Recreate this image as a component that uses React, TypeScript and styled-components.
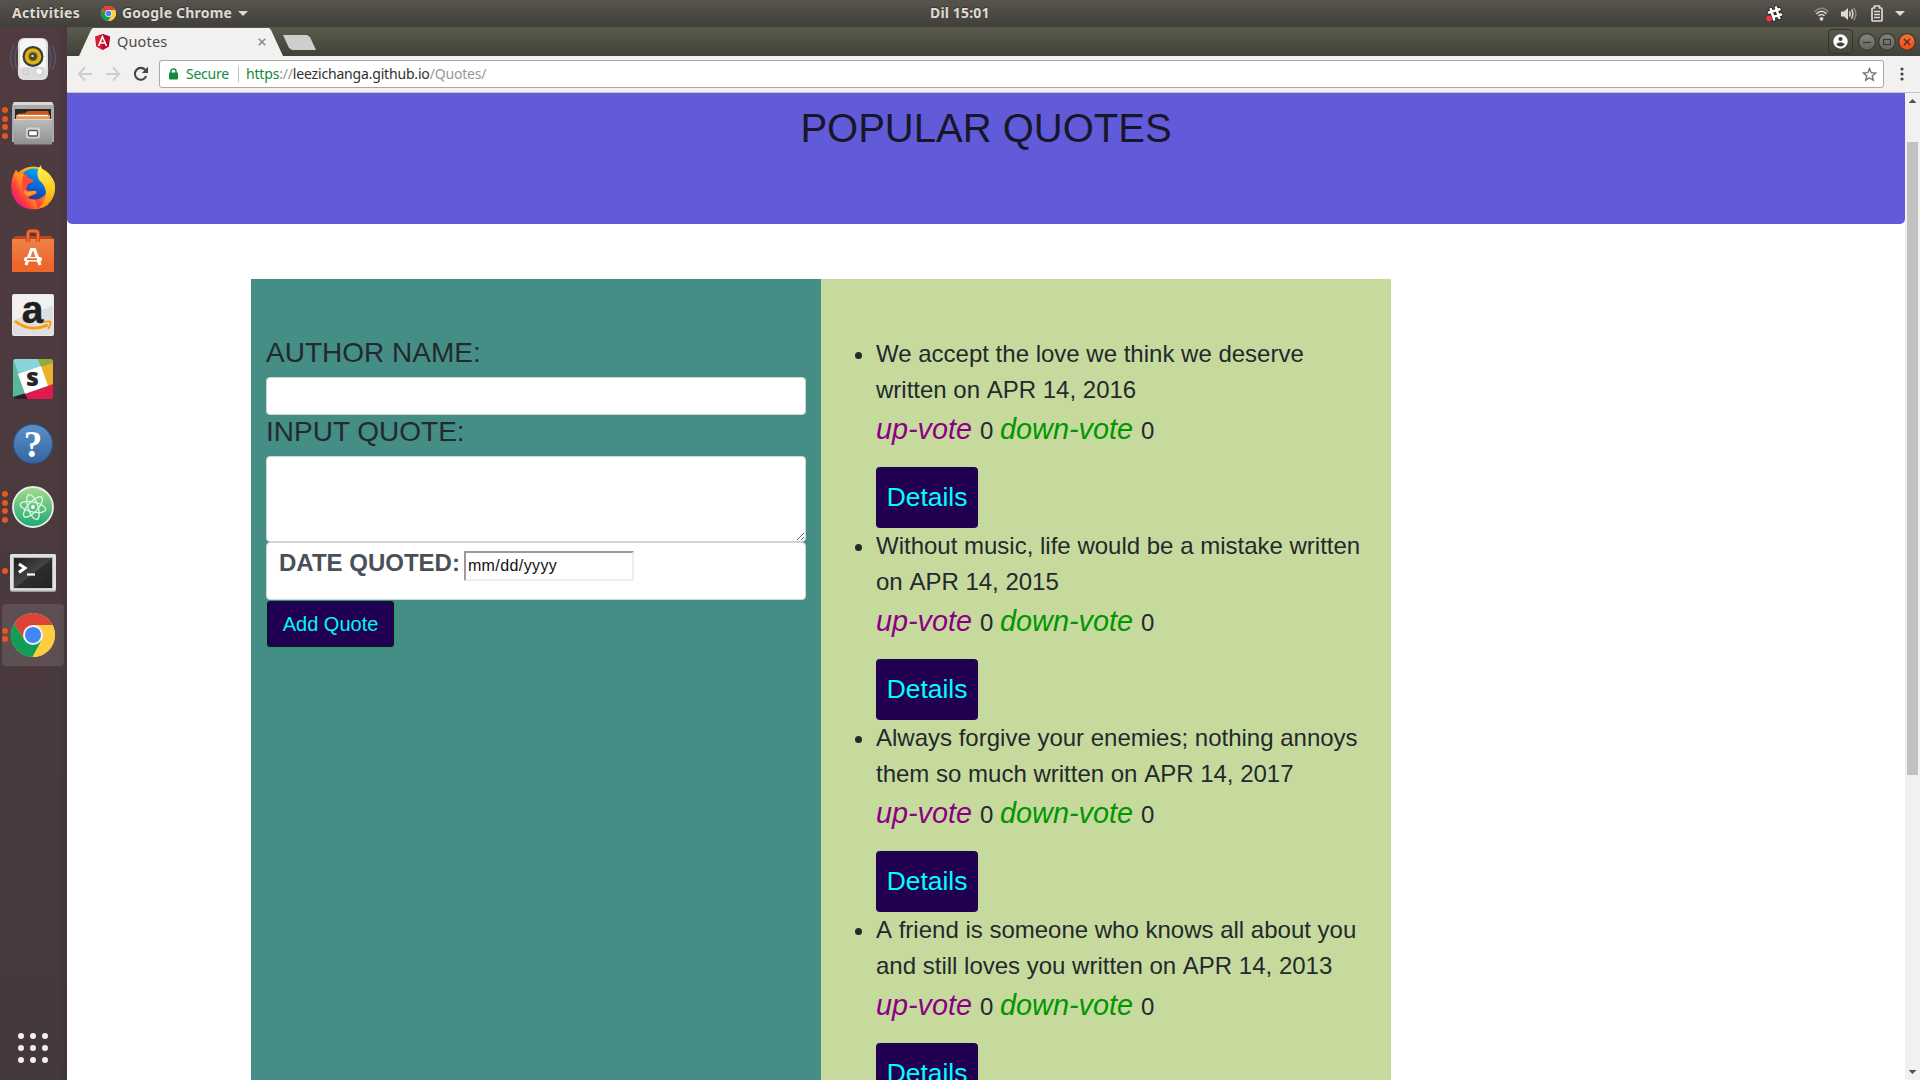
import React from 'react';
import styled, { createGlobalStyle } from 'styled-components';

const Global = createGlobalStyle`
  *, *::before, *::after { box-sizing: border-box; }
  body { margin: 0; overflow: hidden; background: #fff; font-family: "Liberation Sans", Arial, sans-serif; }
  svg { display: block; overflow: visible; flex: none; }
`;

const Desktop = styled.div`
  width: 1920px;
  height: 1080px;
  display: flex;
  flex-direction: column;
  overflow: hidden;
`;

/* ---------- system bar ---------- */
const SystemBar = styled.header`
  flex: none;
  height: 27px;
  display: grid;
  grid-template-columns: 1fr auto 1fr;
  align-items: center;
  padding: 0 15px 0 12px;
  background: linear-gradient(#58544d, #403f3a);
  color: #dfdbd2;
  font: bold 14px/26px "Noto Sans", "Open Sans", sans-serif;
  text-shadow: 0 -1px 1px rgba(0, 0, 0, 0.35);
`;
const SystemLeft = styled.div`
  display: flex;
  align-items: center;
`;
const SystemLabel = styled.span<{ $width: number; $track: number }>`
  width: ${p => p.$width}px;
  letter-spacing: ${p => p.$track}px;
  padding-bottom: 2px;
  line-height: 24px;
  white-space: nowrap;
`;
const AppMenu = styled.div`
  display: flex;
  align-items: center;
  gap: 6px;
  margin-left: 20px;
`;
const Tray = styled.div`
  display: flex;
  align-items: center;
  justify-content: flex-end;
`;
const TrayItem = styled.span<{ $gap: number }>`
  display: flex;
  margin-left: ${p => p.$gap}px;
`;

/* ---------- dock ---------- */
const Workspace = styled.div`
  flex: 1;
  min-height: 0;
  display: flex;
`;
const Dock = styled.nav`
  flex: none;
  width: 67px;
  display: flex;
  flex-direction: column;
  background: linear-gradient(90deg, rgba(0, 0, 0, 0) 85%, rgba(0, 0, 0, 0.06)), linear-gradient(#4f3b40, #4b3a3e 40%, #45383c);
`;
const DockItem = styled.div<{ $active?: boolean; $drop?: number }>`
  position: relative;
  height: 62px;
  width: 62px;
  margin: 1px 0 1px 2px;
  padding-top: ${p => p.$drop ?? 0}px;
  border-radius: 4px;
  background: ${p => (p.$active ? 'rgba(255,255,255,0.11)' : 'transparent')};
  display: flex;
  align-items: center;
  justify-content: center;
`;
const Running = styled.div`
  position: absolute;
  left: 0;
  top: 0;
  height: 100%;
  width: 6px;
  display: flex;
  flex-direction: column;
  justify-content: center;
  gap: 2.6px;
`;
const RunningDot = styled.i`
  width: 6px;
  height: 6px;
  border-radius: 50%;
  background: #e95420;
`;
const AppsGrid = styled.div`
  margin: auto 0 17px 18px;
  display: grid;
  grid-template-columns: repeat(3, 6px);
  gap: 6px;
`;
const AppsDot = styled.i`
  height: 6px;
  border-radius: 50%;
  background: #f2f0ef;
`;

/* ---------- browser ---------- */
const Browser = styled.main`
  flex: 1;
  min-width: 0;
  display: flex;
  flex-direction: column;
`;
const TabStrip = styled.div`
  flex: none;
  height: 29px;
  display: flex;
  align-items: flex-end;
  justify-content: space-between;
  background: linear-gradient(#5b5b4c, #40413a);
`;
const Tabs = styled.div`
  display: flex;
  height: 28px;
  padding-left: 12px;
`;
const Tab = styled.div`
  width: 204px;
  display: flex;
  align-items: center;
  padding: 0 17px 0 16px;
  background: #f2f1f0;
  clip-path: polygon(0 100%, 12px 2px, 14px 0, 190px 0, 192px 2px, 204px 100%);
  color: #4c4a48;
  font: 14.5px/24px "Noto Sans", "Open Sans", sans-serif;
`;
const TabTitle = styled.span`
  flex: 1;
  margin-left: 7px;
  padding-bottom: 2px;
  letter-spacing: 0.15px;
`;
const NewTab = styled.div`
  width: 33px;
  height: 15px;
  margin-top: 7px;
  background: #cfcecc;
  clip-path: polygon(0 0, 24px 0, 27px 2px, 33px 100%, 9px 100%, 6px 13px);
`;
const WindowButtons = styled.div`
  display: flex;
  align-items: center;
  height: 29px;
  padding: 0 3px 0 0;
`;
const ProfileButton = styled.div`
  width: 25px;
  height: 25px;
  margin: 0 4px 0 0;
  border: 1px solid #33342d;
  border-radius: 4px;
  display: flex;
  align-items: center;
  justify-content: center;
`;
const Toolbar = styled.div`
  flex: none;
  height: 37px;
  display: flex;
  align-items: center;
  padding: 0 14px 0 10px;
  background: #f2f1f0;
  border-bottom: 1px solid #c6c4c1;
`;
const NavIcons = styled.div`
  display: flex;
  align-items: center;
  gap: 12px;
  width: 82px;
`;
const Omnibox = styled.div`
  width: 1725px;
  height: 28px;
  display: flex;
  align-items: center;
  padding: 0 6px 0 9px;
  margin-right: 16px;
  border: 1px solid #a9a8a6;
  border-radius: 3px;
  background: #fff;
  font: 14px/24px "Noto Sans", "Open Sans", sans-serif;
`;
const Secure = styled.span`
  width: 52px;
  margin-left: 8px;
  color: #128a3a;
  letter-spacing: -0.25px;
`;
const Separator = styled.i`
  width: 1px;
  height: 16px;
  background: #c3c3c3;
`;
const Url = styled.span`
  flex: 1;
  margin-left: 7px;
  color: #989898;
  letter-spacing: -0.18px;
`;
const Scheme = styled.span`
  color: #128a3a;
`;
const Host = styled.span`
  color: #303030;
`;

/* ---------- web page ---------- */
const Viewport = styled.div`
  flex: 1;
  min-height: 0;
  display: flex;
  background: #fff;
`;
const Page = styled.div`
  flex: 1;
  min-width: 0;
  overflow: hidden;
`;
const Banner = styled.div`
  height: 131px;
  padding-top: 11px;
  border-radius: 0 0 5px 5px;
  background: #625bd9;
  text-align: center;
`;
const Title = styled.h1`
  margin: 0;
  font-size: 40px;
  font-weight: 400;
  line-height: 48px;
  color: #17162b;
`;
const Columns = styled.div`
  display: flex;
  width: 1140px;
  height: 900px;
  margin: 55px 0 0 184px;
`;
const Panel = styled.section<{ $color: string }>`
  width: 570px;
  padding: 57px 15px 0;
  background: ${p => p.$color};
  color: #24292d;
`;
const FieldTitle = styled.h3`
  height: 33px;
  margin: 0 0 8px;
  font-size: 28px;
  font-weight: 400;
  line-height: 33.6px;
`;
const TextInput = styled.input`
  display: block;
  width: 540px;
  height: 38px;
  margin: 0;
  border: 1px solid #ced4da;
  border-radius: 4px;
  background: #fff;
`;
const TextArea = styled.textarea`
  display: block;
  width: 540px;
  height: 86px;
  margin: 0;
  border: 1px solid #ced4da;
  border-radius: 4px;
  background: #fff;
`;
const DateBox = styled.div`
  width: 540px;
  height: 58px;
  padding: 6px 12px;
  display: flex;
  gap: 4px;
  border: 1px solid #ced4da;
  border-radius: 4px;
  background: #fff;
  color: #495057;
  font-size: 24px;
  line-height: 27px;
  font-weight: bold;
`;
const DateInput = styled.div`
  width: 170px;
  height: 30px;
  margin-top: 2px;
  padding: 0 0 0 2px;
  border: 2px solid;
  border-color: #9a9a9a #eee #eee #9a9a9a;
  color: #111;
  font: 16px/26px "Liberation Sans", Arial, sans-serif;
  letter-spacing: 0.4px;
`;
const AddButton = styled.button`
  display: block;
  width: 129px;
  height: 48px;
  padding: 0;
  border: 1px solid #10b04c;
  border-radius: 4px;
  background: #210052;
  color: #00f6f6;
  font: 20px/30px "Liberation Sans", Arial, sans-serif;
`;
const QuoteList = styled.ul`
  margin: 0;
  padding: 0 0 0 40px;
  font-size: 24px;
  line-height: 36px;
`;
const QuoteItem = styled.li`
  height: 192px;
`;
const LooseSpace = styled.span`
  font-kerning: none;
`;
const Votes = styled.div`
  height: 43px;
  margin-bottom: 16px;
  line-height: 43px;
  white-space: pre;
`;
const Vote = styled.em<{ $color: string }>`
  font-size: 28.8px;
  color: ${p => p.$color};
`;
const DetailsButton = styled.button`
  display: block;
  width: 102px;
  height: 61px;
  padding: 0;
  border: 0;
  border-radius: 4px;
  background: #210052;
  color: #00ffff;
  font: 26.4px/39px "Liberation Sans", Arial, sans-serif;
`;
const ScrollTrack = styled.div`
  flex: none;
  width: 15px;
  display: flex;
  flex-direction: column;
  align-items: center;
  background: #f1f1f1;
`;
const ScrollArrow = styled.i<{ $down?: boolean }>`
  width: 8px;
  height: 4px;
  margin: ${p => (p.$down ? 'auto 0 6px' : '6px 0 39px')};
  background: #505050;
  clip-path: ${p => (p.$down ? 'polygon(0 0, 100% 0, 50% 100%)' : 'polygon(50% 0, 100% 100%, 0 100%)')};
`;
const ScrollThumb = styled.div`
  width: 11px;
  height: 633px;
  background: #c1c1c1;
`;

/* ---------- drawings ---------- */
const ChromeLogo = ({ size }: { size: number }) => (
  <svg width={size} height={size} viewBox="0 0 44 44">
    <circle cx="22" cy="22" r="22" fill="#ffcd40" />
    <path d="M22 12H41.6A22 22 0 0 0 2.95 11L13.3 27z" fill="#db4437" />
    <path d="M2.95 11A22 22 0 0 0 21.5 44L31 27 13.3 27z" fill="#0f9d58" />
    <path d="M22 12H41.6A22 22 0 0 1 21.5 44L30.7 27z" fill="#ffcd40" />
    <circle cx="22" cy="22" r="10" fill="#f4f4f4" />
    <circle cx="22" cy="22" r="8" fill="#4285f4" />
  </svg>
);

const Speaker = () => (
  <svg width="50" height="46" viewBox="0 0 50 46">
    <g fill="none" stroke="#5b6f94" strokeWidth="1.4" opacity=".55">
      <path d="M10 9Q4 22 10 36M6 9Q-1 22 6 34M40 9Q46 22 40 36M44 9Q51 22 44 34" />
    </g>
    <rect x="10" y="2" width="30" height="42" rx="6" fill="#dedede" />
    <rect x="12" y="3" width="26" height="39" rx="5" fill="#f5f5f5" />
    <rect x="12" y="31" width="26" height="11" rx="4" fill="#dcdcdc" />
    <circle cx="25" cy="20.500" r="10.500" fill="#3b3b3b" />
    <circle cx="25" cy="20.500" r="8.300" fill="#dcb40d" />
    <circle cx="25" cy="20.500" r="4.500" fill="#6b5a16" />
    <circle cx="25" cy="20.500" r="3" fill="#3b4147" />
    <circle cx="24.500" cy="20" r="1.300" fill="#cfd3d6" />
    <circle cx="31" cy="35.500" r="3.600" fill="#fafafa" stroke="#c4c4c4" />
    <rect x="15.500" y="34" width="4.500" height="4.500" fill="none" stroke="#ccc" />
  </svg>
);

const Cabinet = () => (
  <svg width="42" height="44" viewBox="0 0 42 44">
    <defs>
      <linearGradient id="cab" x1="0" y1="0" x2="0" y2="1">
        <stop offset="0" stopColor="#bcbcbc" />
        <stop offset="1" stopColor="#8f8f8f" />
      </linearGradient>
    </defs>
    <path d="M2 1H40L42 5V41H0V5z" fill="#aaa" />
    <path d="M2 1H40L41.500 4H.5z" fill="#d9d9d9" />
    <rect x="3" y="8" width="36" height="12" fill="#2b2726" />
    <path d="M5 13L13 12 16 10H36L37 13V20H5z" fill="#c9581f" />
    <path d="M4 14H38V20H4z" fill="#eb9a55" />
    <path d="M6 14.500H36" stroke="#fff" strokeWidth="1.300" />
    <path d="M2 18H40V43.500H2z" fill="url(#cab)" />
    <path d="M2 18.500H40" stroke="#d5d5d5" />
    <rect x="14" y="26.500" width="14" height="11" rx="2" fill="#d2d2d2" />
    <rect x="16.500" y="29.500" width="9" height="5.500" rx="1" fill="#fff" stroke="#555" strokeWidth="1.300" />
  </svg>
);

const Firefox = () => (
  <svg width="44" height="46" viewBox="0 0 44 46">
    <defs>
      <linearGradient id="ffa" x1=".9" y1=".1" x2=".15" y2=".9">
        <stop offset="0" stopColor="#ffe226" />
        <stop offset=".4" stopColor="#ff9a1f" />
        <stop offset=".7" stopColor="#ff4038" />
        <stop offset="1" stopColor="#e3108b" />
      </linearGradient>
      <linearGradient id="ffb" x1=".6" y1="0" x2=".2" y2="1">
        <stop offset="0" stopColor="#00a8f5" />
        <stop offset=".6" stopColor="#0a5cd0" />
        <stop offset="1" stopColor="#302a86" />
      </linearGradient>
      <linearGradient id="ffc" x1=".5" y1="0" x2=".6" y2="1">
        <stop offset="0" stopColor="#fff352" />
        <stop offset=".6" stopColor="#ffc81e" />
        <stop offset="1" stopColor="#ff8b17" />
      </linearGradient>
    </defs>
    <circle cx="22" cy="24" r="21.500" fill="url(#ffa)" />
    <circle cx="23" cy="20" r="15.500" fill="url(#ffb)" />
    <path d="M5 6Q6 8 9 10 13 9 16 11L17 14 22 15 22 18 17 20 15 25Q18 28 24 27L25 30Q18 33 16 34 22 39 30 35L24 44Q4 44 1 27-1 15 5 6z" fill="#ff4a35" />
    <path d="M5 6Q6 8 9 10 11 9.500 13 9.800 9 17 12 26 14 35 24 36L27 45Q4 46 1 27-1 15 5 6z" fill="url(#ffa)" />
    <path d="M30 1Q30 7 37 10 47 17 43 31 39 43 27 45 35 38 35 28 34 21 28 16 24 7 30 1z" fill="url(#ffc)" />
    <path d="M13 26Q15 29 21 27 26 26 25.500 29 22 30 18 32 13 32 13 26z" fill="#ff9b27" />
  </svg>
);

const SoftwareBag = () => (
  <svg width="42" height="44" viewBox="0 0 42 44">
    <defs>
      <linearGradient id="bag" x1="0" y1="0" x2="0" y2="1">
        <stop offset="0" stopColor="#ef8146" />
        <stop offset="1" stopColor="#e9622c" />
      </linearGradient>
    </defs>
    <path d="M0 10L4 7H38L42 10z" fill="#b94a1a" />
    <path d="M0 10H42V43H0z" fill="url(#bag)" />
    <path d="M0 33H42V43H0z" fill="#ee6629" />
    <path d="M16 13V5Q16 2 19 2H23Q26 2 26 5V13" fill="none" stroke="#b9441a" strokeWidth="4.200" />
    <path d="M16 13V5Q16 2 19 2H23Q26 2 26 5V13" fill="none" stroke="#ea6a38" strokeWidth="2.400" />
    <path d="M14 36L19.500 20.500H22.500L28 36" fill="none" stroke="#fff" strokeWidth="3.200" />
    <rect x="12" y="28" width="18" height="4.500" rx="2.200" fill="#fff" />
    <path d="M15 30.200H25" stroke="#e9622c" strokeWidth="1.700" />
  </svg>
);

const Amazon = () => (
  <svg width="42" height="42" viewBox="0 0 42 42">
    <rect width="42" height="42" rx="2" fill="#e9e9e9" />
    <rect x="1" y="1" width="40" height="40" rx="2" fill="#f1f1f1" />
    <path d="M1 41V26L41 12V41z" fill="#dfdfdf" />
    <text x="20.500" y="28.500" fontFamily="Liberation Sans, sans-serif" fontWeight="bold" fontSize="39" fill="#1f1f1f" stroke="#1f1f1f" strokeWidth=".5" textAnchor="middle">a</text>
    <path d="M3 27Q18 39 36 31" fill="none" stroke="#ff9900" strokeWidth="2.800" />
    <path d="M31 28.500Q37 26.500 38.500 28 39 31 36 35" fill="none" stroke="#ff9900" strokeWidth="1.800" />
  </svg>
);

const Slack = () => (
  <svg width="40" height="40" viewBox="0 0 40 40">
    <defs>
      <clipPath id="sl"><rect width="40" height="40" rx="3" /></clipPath>
    </defs>
    <g clipPath="url(#sl)">
      <rect width="40" height="40" fill="#3eb890" />
      <path d="M0 0H26L30 9 5 17z" fill="#8ad3d8" />
      <path d="M0 0L6 16 0 18z" fill="#62b5a0" />
      <path d="M25 0H40V5L28 9z" fill="#92ab3c" />
      <path d="M28 8L40 4V27L35 29z" fill="#ecb22e" />
      <path d="M35 29L40 27V40H15L12 36z" fill="#e01a4f" />
      <path d="M0 37L12 33 15 40H0z" fill="#331832" />
      <path d="M0 18L6 16 13 34 0 38z" fill="#55b99b" />
      <path d="M5 15L28 7 35 27 12 35z" fill="#fff" />
      <path d="M12 35L35 27 40 25V40H15z" fill="#e01a4f" />
    </g>
    <text x="19.500" y="27" fontFamily="Open Sans, sans-serif" fontWeight="800" fontSize="25" fill="#262626" textAnchor="middle">s</text>
  </svg>
);

const Help = () => (
  <svg width="40" height="40" viewBox="0 0 40 40">
    <defs>
      <linearGradient id="hp" x1="0" y1="0" x2="0" y2="1">
        <stop offset="0" stopColor="#5b91cb" />
        <stop offset="1" stopColor="#34659f" />
      </linearGradient>
    </defs>
    <circle cx="20" cy="20" r="19.500" fill="url(#hp)" stroke="#2c5588" />
    <text x="20" y="33" fontFamily="Liberation Serif, serif" fontWeight="bold" fontSize="37" fill="#fff" textAnchor="middle">?</text>
  </svg>
);

const Atom = () => (
  <svg width="42" height="42" viewBox="0 0 42 42">
    <defs>
      <linearGradient id="at" x1="0" y1="0" x2="0" y2="1">
        <stop offset="0" stopColor="#a6dc8a" />
        <stop offset="1" stopColor="#1aa975" />
      </linearGradient>
    </defs>
    <circle cx="21" cy="21" r="20" fill="url(#at)" stroke="#ececec" strokeWidth="1.800" />
    <g fill="none" stroke="#e4f6e6" strokeWidth="1.300">
      <ellipse cx="21" cy="21" rx="13" ry="5" transform="rotate(12 21 21)" />
      <ellipse cx="21" cy="21" rx="13" ry="5" transform="rotate(72 21 21)" />
      <ellipse cx="21" cy="21" rx="13" ry="5" transform="rotate(132 21 21)" />
    </g>
    <circle cx="21" cy="21" r="1.900" fill="#fff" />
  </svg>
);

const Terminal = () => (
  <svg width="46" height="38" viewBox="0 0 46 38">
    <defs>
      <linearGradient id="tm" x1="0" y1="0" x2="1" y2="1">
        <stop offset="0" stopColor="#1f1f1f" />
        <stop offset=".5" stopColor="#444" />
        <stop offset=".52" stopColor="#2d2d2d" />
        <stop offset="1" stopColor="#222" />
      </linearGradient>
    </defs>
    <rect width="46" height="38" rx="2" fill="#9d9d9d" />
    <rect width="46" height="36.500" rx="2" fill="#e0e0e0" />
    <rect x="3" y="3" width="40" height="31.500" fill="#b5b5b5" />
    <rect x="4" y="4" width="38" height="30" fill="url(#tm)" />
    <path d="M9 10L15 14 9 18.500" fill="none" stroke="#fff" strokeWidth="3" />
    <path d="M17 20.500H25" stroke="#fff" strokeWidth="2.200" />
  </svg>
);

const Angular = () => (
  <svg width="15" height="16" viewBox="0 0 15 16">
    <path d="M7.500 0L15 2.600 13.800 12.500 7.500 16 1.200 12.500 0 2.600z" fill="#dd1b2e" />
    <path d="M7.500 0L15 2.600 13.800 12.500 7.500 16z" fill="#b8062a" />
    <path d="M3.500 12L7.500 2.800 11.500 12M5 9H10" fill="none" stroke="#fff" strokeWidth="1.600" />
  </svg>
);

const SlackTray = () => (
  <svg width="18" height="18" viewBox="0 0 18 18">
    <g transform="rotate(-17 10 8.500)" strokeLinecap="round" fill="none">
      <path d="M7.300 3V14M12.700 3V14M4.500 5.800H15.500M4.500 11.200H15.500" stroke="#1c1c1a" strokeWidth="4.200" />
      <path d="M7.300 3V14M12.700 3V14M4.500 5.800H15.500M4.500 11.200H15.500" stroke="#fff" strokeWidth="2.600" />
    </g>
    <circle cx="4" cy="13.500" r="3.200" fill="#ee3a48" stroke="#7d2326" strokeWidth=".7" />
  </svg>
);

const Wifi = () => (
  <svg width="15" height="14" viewBox="0 0 15 14" fill="none">
    <path d="M.7 5Q7.500-2.500 14.300 5" stroke="#8b8881" strokeWidth="1.700" />
    <path d="M2.500 7Q7.500 1.500 12.500 7" stroke="#dfdbd2" strokeWidth="1.600" />
    <path d="M4.500 9Q7.500 6 10.500 9" stroke="#dfdbd2" strokeWidth="1.500" />
    <circle cx="7.500" cy="11.800" r="1.900" fill="#dfdbd2" />
  </svg>
);

const Volume = () => (
  <svg width="16" height="14" viewBox="0 0 16 14" fill="none">
    <path d="M0 4.500H3L7 1V13L3 9.500H0z" fill="#dfdbd2" />
    <path d="M8.500 4.500Q10 7 8.500 9.500M10.500 2.500Q13.200 7 10.500 11.500" stroke="#dfdbd2" strokeWidth="1.500" />
    <path d="M12.500.8Q17.300 7 12.500 13.200" stroke="#8b8881" strokeWidth="1.500" />
  </svg>
);

const Battery = () => (
  <svg width="12" height="17" viewBox="0 0 12 17" fill="none" stroke="#dfdbd2">
    <path d="M1 4Q1 3 2 3H3.500V1H8.500V3H10Q11 3 11 4V15Q11 16 10 16H2Q1 16 1 15z" strokeWidth="1.700" />
    <path d="M3 6.500H9M3 9.500H9M3 12.500H9" strokeWidth="1.500" />
  </svg>
);

const Caret = () => (
  <svg width="10" height="5" viewBox="0 0 10 5">
    <path d="M0 0H10L5 5z" fill="#dfdbd2" />
  </svg>
);

const WindowControl = ({ kind }: { kind: 'min' | 'max' | 'close' }) => (
  <svg width="20" height="20" viewBox="0 0 20 20" fill="none">
    <defs>
      <linearGradient id={'wc' + kind} x1="0" y1="0" x2="0" y2="1">
        <stop offset="0" stopColor={kind === 'close' ? '#f4743f' : '#86857c'} />
        <stop offset="1" stopColor={kind === 'close' ? '#e84b18' : '#66665e'} />
      </linearGradient>
    </defs>
    <circle cx="10" cy="10" r="8.300" fill={`url(#wc${kind})`} stroke="#35362f" strokeWidth="1.200" />
    {kind === 'min' && <path d="M6 10.500H14" stroke="#383933" strokeWidth="1.200" />}
    {kind === 'max' && <rect x="6.500" y="7.500" width="7" height="5" stroke="#383933" strokeWidth="1.200" />}
    {kind === 'close' && <path d="M7 7L13 13M13 7L7 13" stroke="#4b2a17" strokeWidth="1.300" />}
  </svg>
);

const ProfileIcon = () => (
  <svg width="15" height="15" viewBox="0 0 15 15">
    <circle cx="7.500" cy="7.500" r="7.200" fill="#fff" />
    <circle cx="7.500" cy="5" r="2.100" fill="#3f4038" />
    <path d="M3.200 10.300Q5 8.300 7.500 8.300T11.800 10.300Q10.300 12.600 7.500 12.600T3.200 10.300z" fill="#3f4038" />
  </svg>
);

const ArrowIcon = ({ back }: { back?: boolean }) => (
  <svg width="16" height="16" viewBox="0 0 16 16" fill="none" stroke="#cfcecc" strokeWidth="1.900">
    {back ? <path d="M15 8H2M8 1.500L1.800 8 8 14.500" /> : <path d="M1 8H14M8 1.500L14.200 8 8 14.500" />}
  </svg>
);

const Reload = () => (
  <svg width="16" height="16" viewBox="0 0 16 16" fill="none">
    <path d="M13.200 10.200A5.900 5.900 0 1 1 12.300 4" stroke="#454545" strokeWidth="2.100" />
    <path d="M15 .8V7H8.800z" fill="#454545" />
  </svg>
);

const Lock = () => (
  <svg width="9" height="12" viewBox="0 0 9 12" fill="none">
    <rect x="0" y="4.500" width="9" height="7" rx=".8" fill="#128a3a" />
    <path d="M2 5V3Q2 1 4.500 1T7 3V5" stroke="#128a3a" strokeWidth="1.400" />
  </svg>
);

const Star = () => (
  <svg width="15" height="15" viewBox="0 0 15 15" fill="none" stroke="#707070" strokeWidth="1.300">
    <path d="M7.500 1.500L9.200 5.700 13.700 6 10.200 8.900 11.400 13.300 7.500 10.800 3.600 13.300 4.800 8.900 1.300 6 5.800 5.700z" />
  </svg>
);

const Kebab = () => (
  <svg width="4" height="14" viewBox="0 0 4 14" fill="#454545">
    <circle cx="2" cy="2" r="1.600" />
    <circle cx="2" cy="7" r="1.600" />
    <circle cx="2" cy="12" r="1.600" />
  </svg>
);

const CloseX = () => (
  <svg width="8" height="8" viewBox="0 0 8 8">
    <path d="M.7.7L7.300 7.300M7.300.7L.7 7.300" stroke="#8a8987" strokeWidth="1.600" />
  </svg>
);

/* ---------- data ---------- */
const dockApps: { icon: React.ReactNode; windows: number; active?: boolean; drop?: number }[] = [
  { icon: <Speaker />, windows: 0 },
  { icon: <Cabinet />, windows: 4 },
  { icon: <Firefox />, windows: 0 },
  { icon: <SoftwareBag />, windows: 0 },
  { icon: <Amazon />, windows: 0 },
  { icon: <Slack />, windows: 0 },
  { icon: <Help />, windows: 0, drop: 2 },
  { icon: <Atom />, windows: 4 },
  { icon: <Terminal />, windows: 1, drop: 3 },
  { icon: <ChromeLogo size={44} />, windows: 2, active: true },
];

const quotes = [
  ['We accept the love we think we deserve', 'written on APR 14, 2016'],
  ['Without music, life would be a mistake written', 'on APR 14, 2015'],
  ['Always forgive your enemies; nothing annoys', 'them so much written on APR 14, 2017'],
  ['A friend is someone who knows all about you', 'and still loves you written on APR 14, 2013'],
];

/* Keeps the space next to a capital A at its full, unkerned width. */
const QuoteLine = ({ text }: { text: string }) => (
  <>
    {text.split(/( (?=A)|(?<=A) )/).map((part, i) =>
      part === ' ' ? <LooseSpace key={i}> </LooseSpace> : part
    )}
  </>
);

export default function App() {
  return (
    <Desktop>
      <Global />
      <SystemBar>
        <SystemLeft>
          <SystemLabel $width={69} $track={0.3}>Activities</SystemLabel>
          <AppMenu>
            <ChromeLogo size={15} />
            <SystemLabel $width={110} $track={0.2}>Google Chrome</SystemLabel>
            <Caret />
          </AppMenu>
        </SystemLeft>
        <SystemLabel $width={57} $track={0.15}>Dil 15:01</SystemLabel>
        <Tray>
          <TrayItem $gap={0}><SlackTray /></TrayItem>
          <TrayItem $gap={31}><Wifi /></TrayItem>
          <TrayItem $gap={12}><Volume /></TrayItem>
          <TrayItem $gap={14}><Battery /></TrayItem>
          <TrayItem $gap={12}><Caret /></TrayItem>
        </Tray>
      </SystemBar>
      <Workspace>
        <Dock>
          {dockApps.map((app, i) => (
            <DockItem key={i} $active={app.active} $drop={app.drop}>
              <Running>
                {Array.from({ length: app.windows }, (_, n) => <RunningDot key={n} />)}
              </Running>
              {app.icon}
            </DockItem>
          ))}
          <AppsGrid>
            {Array.from({ length: 9 }, (_, n) => <AppsDot key={n} />)}
          </AppsGrid>
        </Dock>
        <Browser>
          <TabStrip>
            <Tabs>
              <Tab>
                <Angular />
                <TabTitle>Quotes</TabTitle>
                <CloseX />
              </Tab>
              <NewTab />
            </Tabs>
            <WindowButtons>
              <ProfileButton><ProfileIcon /></ProfileButton>
              <WindowControl kind="min" />
              <WindowControl kind="max" />
              <WindowControl kind="close" />
            </WindowButtons>
          </TabStrip>
          <Toolbar>
            <NavIcons>
              <ArrowIcon back />
              <ArrowIcon />
              <Reload />
            </NavIcons>
            <Omnibox>
              <Lock />
              <Secure>Secure</Secure>
              <Separator />
              <Url><Scheme>https</Scheme>://<Host>leezichanga.github.io</Host>/Quotes/</Url>
              <Star />
            </Omnibox>
            <Kebab />
          </Toolbar>
          <Viewport>
            <Page>
              <Banner>
                <Title>POPULAR QUOTES</Title>
              </Banner>
              <Columns>
                <Panel $color="#448e85">
                  <FieldTitle>AUTHOR NAME:</FieldTitle>
                  <TextInput />
                  <FieldTitle>INPUT QUOTE:</FieldTitle>
                  <TextArea />
                  <DateBox>
                    DATE QUOTED:
                    <DateInput>mm/dd/yyyy</DateInput>
                  </DateBox>
                  <AddButton>Add Quote</AddButton>
                </Panel>
                <Panel $color="#c7da9d">
                  <QuoteList>
                    {quotes.map(([first, second]) => (
                      <QuoteItem key={first}>
                        <QuoteLine text={first} /><br /><QuoteLine text={second} />
                        <Votes>
                          <Vote $color="#8b0083">up-vote </Vote>0 <Vote $color="#009600">down-vote </Vote>0
                        </Votes>
                        <DetailsButton>Details</DetailsButton>
                      </QuoteItem>
                    ))}
                  </QuoteList>
                </Panel>
              </Columns>
            </Page>
            <ScrollTrack>
              <ScrollArrow />
              <ScrollThumb />
              <ScrollArrow $down />
            </ScrollTrack>
          </Viewport>
        </Browser>
      </Workspace>
    </Desktop>
  );
}
